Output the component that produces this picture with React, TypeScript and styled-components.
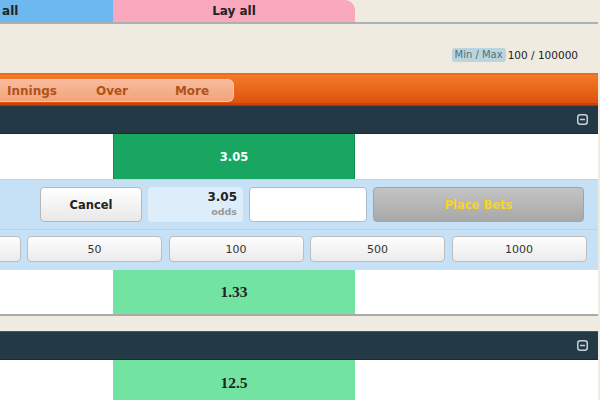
import React from 'react';
import styled, { createGlobalStyle } from 'styled-components';

const GlobalStyle = createGlobalStyle`
  html, body {
    margin: 0;
    padding: 0;
    background: #efebe1;
    font-family: "DejaVu Sans", Verdana, sans-serif;
    overflow: hidden;
  }
`;

const Page = styled.div`
  width: 598px;
  overflow: hidden;
`;

const TabBar = styled.div`
  display: flex;
  height: 22px;
  border-bottom: 2px solid #a9b1b3;
`;

const BetTab = styled.div<{ $kind: 'back' | 'lay' }>`
  flex: 0 0 242px;
  height: 22px;
  line-height: 22px;
  text-align: center;
  font-size: 12px;
  font-weight: bold;
  color: #222;
  background: ${p => (p.$kind === 'back' ? '#6db8ee' : '#f9a8be')};
  margin-left: ${p => (p.$kind === 'back' ? '-129px' : '0')};
  border-radius: ${p => (p.$kind === 'lay' ? '0 10px 0 0' : '0')};
`;

const InfoBar = styled.div`
  height: 49px;
  box-sizing: border-box;
  padding: 24px 20px 0 0;
  display: flex;
  justify-content: flex-end;
  align-items: flex-start;
  gap: 2px;
`;

const Badge = styled.span`
  background: #b9d5dd;
  color: #5b6f79;
  font-size: 10px;
  line-height: 14px;
  padding: 0 3px;
  border-radius: 3px;
`;

const LimitText = styled.span`
  font-size: 10.5px;
  line-height: 14px;
  color: #222;
`;

const OrangeBar = styled.div`
  height: 32px;
  box-sizing: border-box;
  border-top: 2px solid #ee6a1f;
  border-bottom: 2px solid #c9420b;
  background: linear-gradient(#f47b27, #de520e);
  box-shadow: inset 0 1px 0 #9d968f;
  padding-top: 4px;
`;

const Pill = styled.div`
  margin-left: -8px;
  width: 242px;
  height: 23px;
  box-sizing: border-box;
  display: flex;
  background: linear-gradient(#f8bb9b, #f3a37b);
  border: 1px solid #f7c7ad;
  border-left: none;
  border-radius: 0 6px 6px 0;
`;

const PillItem = styled.div`
  flex: 0 0 80px;
  text-align: center;
  line-height: 22px;
  font-size: 12px;
  font-weight: bold;
  color: #b1521b;
`;

const MarketHead = styled.div`
  height: 29px;
  box-sizing: border-box;
  background: #243946;
  border-top: 1px solid #3e5a6b;
  border-bottom: 1px solid #1b2b36;
  display: flex;
  justify-content: flex-end;
  align-items: center;
  padding-right: 10px;
`;

const Row = styled.div<{ $thick?: boolean }>`
  display: grid;
  grid-template-columns: 113px 242px 1fr;
  height: 46px;
  box-sizing: border-box;
  background: #fff;
  border-bottom: ${p => (p.$thick ? '2px solid #a9abab' : '1px solid #c9d3db')};
`;

const PriceCell = styled.div<{ $selected?: boolean }>`
  display: flex;
  align-items: center;
  justify-content: center;
  font-weight: bold;
  background: ${p => (p.$selected ? '#18a660' : '#72e3a1')};
  color: ${p => (p.$selected ? '#fff' : '#222')};
  font-family: ${p => (p.$selected ? '"DejaVu Sans", sans-serif' : '"Liberation Serif", serif')};
  font-size: ${p => (p.$selected ? '11.5px' : '15.5px')};
  box-shadow: ${p => (p.$selected ? 'inset 1px 0 #0f8a4c, inset -1px 0 #0f8a4c' : 'none')};
`;

const Slip = styled.div`
  background: #c6e1f6;
  height: 90px;
  box-sizing: border-box;
`;

const SlipTop = styled.div`
  display: flex;
  gap: 6px;
  padding: 7px 13px 0 40px;
  height: 50px;
  box-sizing: border-box;
  border-bottom: 1px solid #b4d3ec;
`;

const CancelButton = styled.button`
  flex: 0 0 102px;
  height: 35px;
  border: 1px solid #b7b7b7;
  border-radius: 4px;
  background: linear-gradient(#ffffff, #e8e8e8);
  font-family: "DejaVu Sans", sans-serif;
  font-size: 11.5px;
  font-weight: bold;
  color: #222;
`;

const OddsBox = styled.div`
  flex: 0 0 95px;
  height: 35px;
  box-sizing: border-box;
  background: #ddedfa;
  border-radius: 4px;
  padding: 3px 6px 0 0;
  text-align: right;
  display: flex;
  flex-direction: column;
`;

const OddsValue = styled.span`
  font-size: 12px;
  font-weight: bold;
  color: #222;
  line-height: 15px;
`;

const OddsLabel = styled.span`
  font-size: 9.5px;
  font-weight: bold;
  color: #9a9a9a;
  line-height: 13px;
`;

const StakeInput = styled.input`
  flex: 0 0 118px;
  width: 118px;
  min-width: 0;
  height: 35px;
  box-sizing: border-box;
  padding: 0;
  border: 1px solid #a9bccc;
  border-radius: 4px;
  background: #fff;
  outline: none;
`;

const PlaceButton = styled.button`
  flex: 0 0 211px;
  height: 35px;
  border: 1px solid #a3a3a3;
  border-radius: 4px;
  background: linear-gradient(#c4c4c4, #a8a8a8);
  font-family: "DejaVu Sans", sans-serif;
  font-size: 11.5px;
  font-weight: bold;
  color: #f9d51e;
`;

const StakeRow = styled.div`
  display: flex;
  gap: 6.5px;
  padding-top: 6px;
  margin-left: -114.5px;
`;

const StakeButton = styled.button`
  flex: 0 0 135px;
  height: 26px;
  border: 1px solid #bdbdbd;
  border-radius: 4px;
  background: linear-gradient(#fdfdfd, #ebebeb);
  font-family: "DejaVu Sans", sans-serif;
  font-size: 11px;
  color: #333;
  padding: 0;
`;

const Gap = styled.div`
  height: 15px;
`;

const MinusIcon = () => (
  <svg width="11" height="11" viewBox="0 0 11 11">
    <rect x="0.75" y="0.75" width="9.5" height="9.5" rx="2.5" fill="none" stroke="#c9d1d6" strokeWidth="1.5" />
    <line x1="3" y1="5.5" x2="8" y2="5.5" stroke="#c9d1d6" strokeWidth="1.5" />
  </svg>
);

const stakes = [10, 50, 100, 500, 1000];

export default function App() {
  return (
    <Page>
      <GlobalStyle />
      <TabBar>
        <BetTab $kind="back">Back all</BetTab>
        <BetTab $kind="lay">Lay all</BetTab>
      </TabBar>
      <InfoBar>
        <Badge>Min / Max</Badge>
        <LimitText>100 / 100000</LimitText>
      </InfoBar>
      <OrangeBar>
        <Pill>
          <PillItem>Innings</PillItem>
          <PillItem>Over</PillItem>
          <PillItem>More</PillItem>
        </Pill>
      </OrangeBar>
      <MarketHead>
        <MinusIcon />
      </MarketHead>
      <Row>
        <div />
        <PriceCell $selected>3.05</PriceCell>
        <div />
      </Row>
      <Slip>
        <SlipTop>
          <CancelButton>Cancel</CancelButton>
          <OddsBox>
            <OddsValue>3.05</OddsValue>
            <OddsLabel>odds</OddsLabel>
          </OddsBox>
          <StakeInput />
          <PlaceButton>Place Bets</PlaceButton>
        </SlipTop>
        <StakeRow>
          {stakes.map(s => (
            <StakeButton key={s}>{s}</StakeButton>
          ))}
        </StakeRow>
      </Slip>
      <Row $thick>
        <div />
        <PriceCell>1.33</PriceCell>
        <div />
      </Row>
      <Gap />
      <MarketHead>
        <MinusIcon />
      </MarketHead>
      <Row>
        <div />
        <PriceCell>12.5</PriceCell>
        <div />
      </Row>
    </Page>
  );
}
